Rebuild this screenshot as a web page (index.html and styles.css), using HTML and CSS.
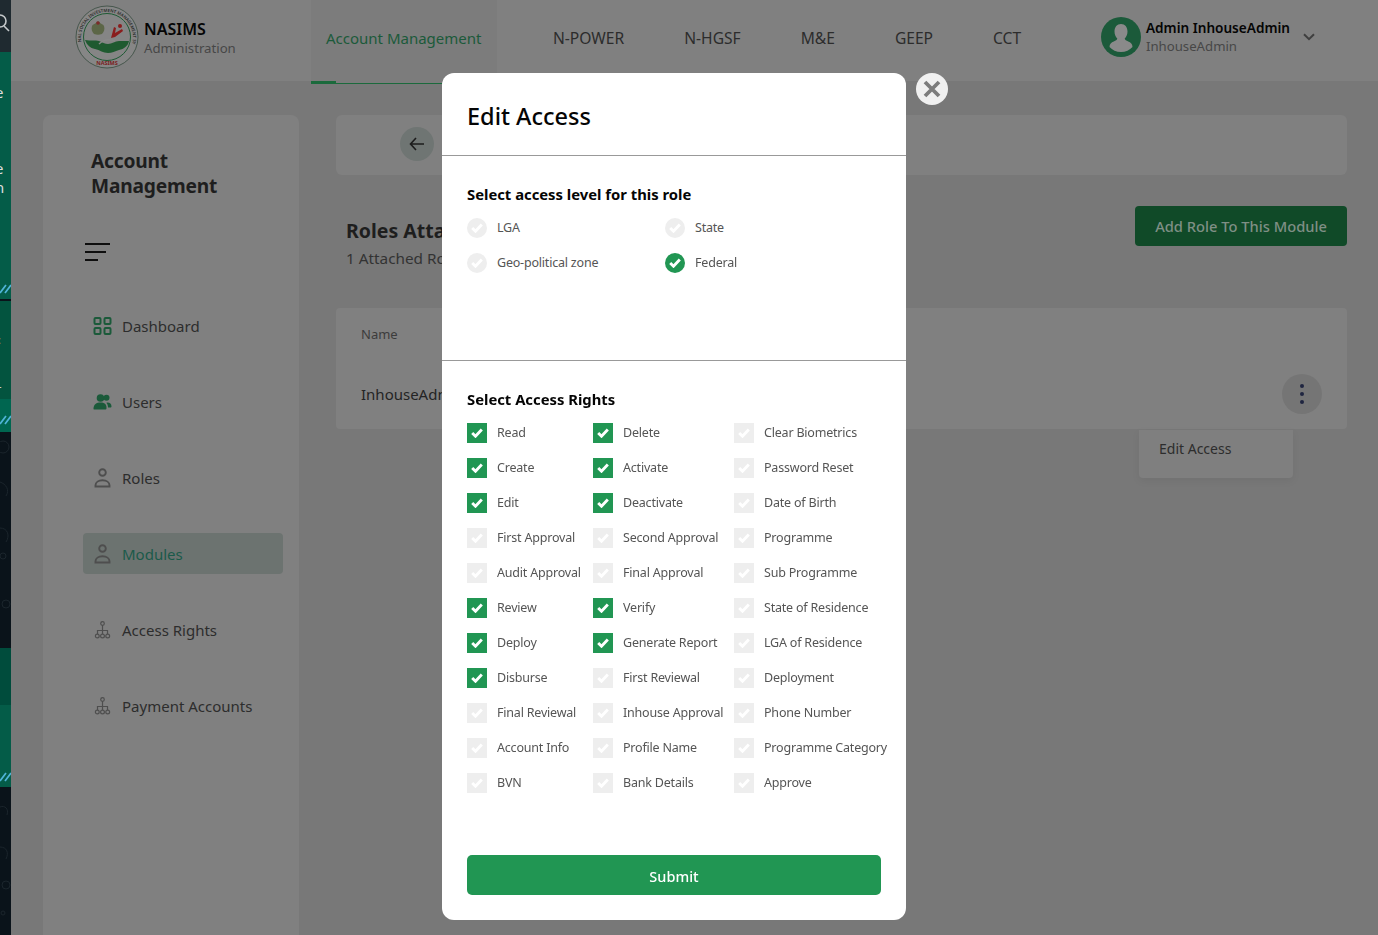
FILE: index.html
```html
<!DOCTYPE html>
<html lang="en">
<head>
    <meta charset="UTF-8">
    <meta name="viewport" content="width=device-width, initial-scale=1.0">
    <title>NASIMS - Edit Access</title>
    <link rel="stylesheet" href="styles.css">
</head>
<body>
    <svg class="icon-defs" width="0" height="0">
        <symbol id="tick" viewBox="0 0 12 10"><path d="M1.200 5 4.500 8.200 10.800 1.600" fill="none" stroke="currentColor" stroke-width="2.900"/></symbol>
        <symbol id="person" viewBox="0 0 16 20"><circle cx="8" cy="4.500" r="3.300" fill="none" stroke="currentColor" stroke-width="1.900"/><path d="M1 18.500h14v-1.200c0-3-3-5-7-5s-7 2-7 5z" fill="none" stroke="currentColor" stroke-width="1.900"/></symbol>
        <symbol id="tree" viewBox="0 0 16 18"><g fill="none" stroke="currentColor" stroke-width="1.200"><circle cx="8" cy="2.500" r="1.800"/><path d="M8 4.300V13M3 13V9.500h10V13"/><circle cx="2.800" cy="15" r="1.900"/><circle cx="8" cy="15" r="1.900"/><circle cx="13.200" cy="15" r="1.900"/></g></symbol>
        <symbol id="marks" viewBox="0 0 11 11"><path d="M0 10 6 2M5 10 11 2" fill="none" stroke="#4fb4d8" stroke-width="1.700"/></symbol>
    </svg>

    <div class="strip">
        <div class="strip-top"><svg viewBox="0 0 11 52" width="11" height="52"><circle cx="0" cy="21" r="6" fill="none" stroke="#c4c8ca" stroke-width="1.600"/><path d="M4 26l5 5" stroke="#c4c8ca" stroke-width="1.600"/></svg></div>
        <div class="strip-green s1"><span class="strip-text">e</span><span class="strip-text">e</span><span class="strip-text">n</span><svg class="strip-marks" width="11" height="11"><use href="#marks"/></svg></div>
        <div class="strip-green s2"><span class="strip-text small">:</span><span class="strip-text small">-</span></div>
        <div class="strip-green s3"><svg class="strip-marks" width="11" height="11"><use href="#marks"/></svg></div>
        <div class="strip-dark d1"><svg viewBox="0 0 11 216" width="11" height="216"><g fill="none" stroke="#1b252c"><circle cx="3" cy="15" r="6"/><path d="M0 50c6 2 10 8 6 14M0 96c8 0 10 8 6 14"/><circle cx="3" cy="124" r="3"/><circle cx="6" cy="172" r="4"/></g></svg></div>
        <div class="strip-green s4"></div>
        <div class="strip-green s5"><svg class="strip-marks" width="11" height="11"><use href="#marks"/></svg></div>
        <div class="strip-dark d2"><svg viewBox="0 0 11 148" width="11" height="148"><g fill="none" stroke="#1b252c"><path d="M0 20c5-2 9 2 7 8M0 60c7 0 9 6 6 12"/><circle cx="6" cy="98" r="4"/><circle cx="3" cy="126" r="2"/></g></svg></div>
    </div>

    <div class="page">
        <header class="topbar">
            <div class="brand">
                <svg class="logo" viewBox="0 0 64 64" width="64" height="64">
                    <defs>
                        <path id="ring-top" d="M6.500 38A26 26 0 1 1 57.500 38"/>
                    </defs>
                    <circle cx="32" cy="32" r="31" fill="#868686" stroke="#46564c" stroke-width="1"/>
                    <circle cx="32" cy="32" r="23.500" fill="#858585" stroke="#1e5a34" stroke-width="1"/>
                    <text class="logo-ring"><textPath href="#ring-top" startOffset="50%" text-anchor="middle">NATIONAL SOCIAL INVESTMENT MANAGEMENT SYSTEM</textPath></text>
                    <path d="M19 29c-2-2-3-5-2-8 1-2 3-2 4-3 1-2 3-2 4 0 1 1 3 1 4 3 1 3 0 6-2 8-3 1-5 1-8 0z" fill="#5c6647"/>
                    <circle cx="23" cy="18" r="1.800" fill="#7c2a2a"/>
                    <path d="M36 33l3-11 2 1-1 5 7-4 1 2-8 6z" fill="#8a1d1d"/>
                    <circle cx="45" cy="21" r="2" fill="#8a1d1d"/>
                    <path d="M10 35c6 1 10 0 14 1 3 1 6 3 9 3 4 0 7-3 11-3h10c-1 5-5 8-10 9-4 1-7 3-11 3-5 0-8-3-13-4-5-1-8-4-10-9z" fill="#1f5a30"/>
                    <path d="M24 39c4-4 10-5 16-3" fill="none" stroke="#8a8a8a" stroke-width="1.400"/>
                    <text class="logo-name" x="32" y="60" text-anchor="middle">NASIMS</text>
                </svg>
                <div class="brand-text">
                    <strong>NASIMS</strong>
                    <span>Administration</span>
                </div>
            </div>
            <nav class="topnav">
                <a class="topnav-item active" href="#">Account Management</a>
                <a class="topnav-item" href="#">N-POWER</a>
                <a class="topnav-item" href="#">N-HGSF</a>
                <a class="topnav-item" href="#">M&amp;E</a>
                <a class="topnav-item" href="#">GEEP</a>
                <a class="topnav-item" href="#">CCT</a>
            </nav>
            <div class="user">
                <svg class="avatar" viewBox="0 0 40 40" width="40" height="40">
                    <circle cx="20" cy="20" r="20" fill="#1b5a3a"/>
                    <path d="M20 7c4 0 6.500 3 6.500 7.500 0 3-1.200 5.500-2.800 7 .3 1.500 1.500 2 3.500 3 2.500 1 4.300 2.500 4.300 5.500-2.800 3-6.800 5-11.500 5s-8.700-2-11.500-5c0-3 1.800-4.500 4.300-5.500 2-1 3.200-1.500 3.500-3-1.600-1.500-2.800-4-2.800-7C13.500 10 16 7 20 7z" fill="#8a8a8a"/>
                </svg>
                <div class="user-text">
                    <strong>Admin InhouseAdmin</strong>
                    <span>InhouseAdmin</span>
                </div>
                <svg class="chevron" viewBox="0 0 12 8" width="12" height="8"><path d="M1 1.200 6 6.200 11 1.200" fill="none" stroke="#3f3f3f" stroke-width="2"/></svg>
            </div>
        </header>

        <div class="main">
            <aside class="sidebar">
                <h2 class="side-title">Account<br>Management</h2>
                <div class="burger"><i></i><i></i><i></i></div>
                <ul class="side-menu">
                    <li class="side-item">
                        <svg class="side-icon green" viewBox="0 0 18 18" width="18" height="18"><g fill="none" stroke="currentColor" stroke-width="2"><rect x="1" y="1" width="6" height="6" rx="1"/><rect x="11" y="1" width="6" height="6" rx="1"/><rect x="1" y="11" width="6" height="6" rx="1"/><rect x="11" y="11" width="6" height="6" rx="1"/></g></svg>
                        Dashboard
                    </li>
                    <li class="side-item">
                        <svg class="side-icon green" viewBox="0 0 18 16" width="18" height="16"><circle cx="7" cy="4" r="3.800" fill="currentColor"/><circle cx="13" cy="3.800" r="3" fill="currentColor"/><path d="M0 15c0-5 3-6.500 7-6.500s6 1.500 6 5.500c0 1-.5 1.500-1.500 1.500h-10C.5 15.500 0 15.500 0 15z" fill="currentColor"/><path d="M14 8.500c2.500 0 4 1.500 4 4 0 .8-.5 1-1.200 1H14.500c0-2-.6-3.700-1.700-4.800z" fill="currentColor"/></svg>
                        Users
                    </li>
                    <li class="side-item">
                        <svg class="side-icon" width="16" height="20"><use href="#person"/></svg>
                        Roles
                    </li>
                    <li class="side-item selected">
                        <svg class="side-icon" width="16" height="20"><use href="#person"/></svg>
                        Modules
                    </li>
                    <li class="side-item">
                        <svg class="side-icon" width="16" height="18"><use href="#tree"/></svg>
                        Access Rights
                    </li>
                    <li class="side-item">
                        <svg class="side-icon" width="16" height="18"><use href="#tree"/></svg>
                        Payment Accounts
                    </li>
                </ul>
            </aside>

            <section class="content">
                <div class="back-card">
                    <span class="back-btn"><svg viewBox="0 0 16 14" width="16" height="14"><path d="M7 1 1.500 7 7 13M2 7h13" fill="none" stroke="#1c1c1c" stroke-width="1.600"/></svg></span>
                </div>
                <div class="title-row">
                    <div>
                        <h2 class="role-title">Roles Attached</h2>
                        <p class="role-sub">1 Attached Role</p>
                    </div>
                    <button class="add-btn">Add Role To This Module</button>
                </div>
                <div class="table-card">
                    <div class="table-head">Name</div>
                    <div class="table-row">
                        <span>InhouseAdmin</span>
                        <span class="dots"><i></i><i></i><i></i></span>
                    </div>
                    <div class="row-menu">Edit Access</div>
                </div>
            </section>
        </div>
    </div>

    <div class="overlay">
        <div class="modal">
            <h1 class="modal-title">Edit Access</h1>

            <div class="level-part">
                <h3 class="part-title">Select access level for this role</h3>
                <div class="level-grid">
                    <label class="opt"><span class="box round"><svg width="12" height="10"><use href="#tick"/></svg></span>LGA</label>
                    <label class="opt"><span class="box round"><svg width="12" height="10"><use href="#tick"/></svg></span>State</label>
                    <label class="opt"><span class="box round"><svg width="12" height="10"><use href="#tick"/></svg></span>Geo-political zone</label>
                    <label class="opt"><span class="box round on"><svg width="12" height="10"><use href="#tick"/></svg></span>Federal</label>
                </div>
            </div>

            <div class="rights-part">
                <h3 class="part-title">Select Access Rights</h3>
                <div class="rights-grid">
                    <label class="opt"><span class="box on"><svg width="12" height="10"><use href="#tick"/></svg></span>Read</label>
                    <label class="opt"><span class="box on"><svg width="12" height="10"><use href="#tick"/></svg></span>Delete</label>
                    <label class="opt"><span class="box"><svg width="12" height="10"><use href="#tick"/></svg></span>Clear Biometrics</label>
                    <label class="opt"><span class="box on"><svg width="12" height="10"><use href="#tick"/></svg></span>Create</label>
                    <label class="opt"><span class="box on"><svg width="12" height="10"><use href="#tick"/></svg></span>Activate</label>
                    <label class="opt"><span class="box"><svg width="12" height="10"><use href="#tick"/></svg></span>Password Reset</label>
                    <label class="opt"><span class="box on"><svg width="12" height="10"><use href="#tick"/></svg></span>Edit</label>
                    <label class="opt"><span class="box on"><svg width="12" height="10"><use href="#tick"/></svg></span>Deactivate</label>
                    <label class="opt"><span class="box"><svg width="12" height="10"><use href="#tick"/></svg></span>Date of Birth</label>
                    <label class="opt"><span class="box"><svg width="12" height="10"><use href="#tick"/></svg></span>First Approval</label>
                    <label class="opt"><span class="box"><svg width="12" height="10"><use href="#tick"/></svg></span>Second Approval</label>
                    <label class="opt"><span class="box"><svg width="12" height="10"><use href="#tick"/></svg></span>Programme</label>
                    <label class="opt"><span class="box"><svg width="12" height="10"><use href="#tick"/></svg></span>Audit Approval</label>
                    <label class="opt"><span class="box"><svg width="12" height="10"><use href="#tick"/></svg></span>Final Approval</label>
                    <label class="opt"><span class="box"><svg width="12" height="10"><use href="#tick"/></svg></span>Sub Programme</label>
                    <label class="opt"><span class="box on"><svg width="12" height="10"><use href="#tick"/></svg></span>Review</label>
                    <label class="opt"><span class="box on"><svg width="12" height="10"><use href="#tick"/></svg></span>Verify</label>
                    <label class="opt"><span class="box"><svg width="12" height="10"><use href="#tick"/></svg></span>State of Residence</label>
                    <label class="opt"><span class="box on"><svg width="12" height="10"><use href="#tick"/></svg></span>Deploy</label>
                    <label class="opt"><span class="box on"><svg width="12" height="10"><use href="#tick"/></svg></span>Generate Report</label>
                    <label class="opt"><span class="box"><svg width="12" height="10"><use href="#tick"/></svg></span>LGA of Residence</label>
                    <label class="opt"><span class="box on"><svg width="12" height="10"><use href="#tick"/></svg></span>Disburse</label>
                    <label class="opt"><span class="box"><svg width="12" height="10"><use href="#tick"/></svg></span>First Reviewal</label>
                    <label class="opt"><span class="box"><svg width="12" height="10"><use href="#tick"/></svg></span>Deployment</label>
                    <label class="opt"><span class="box"><svg width="12" height="10"><use href="#tick"/></svg></span>Final Reviewal</label>
                    <label class="opt"><span class="box"><svg width="12" height="10"><use href="#tick"/></svg></span>Inhouse Approval</label>
                    <label class="opt"><span class="box"><svg width="12" height="10"><use href="#tick"/></svg></span>Phone Number</label>
                    <label class="opt"><span class="box"><svg width="12" height="10"><use href="#tick"/></svg></span>Account Info</label>
                    <label class="opt"><span class="box"><svg width="12" height="10"><use href="#tick"/></svg></span>Profile Name</label>
                    <label class="opt"><span class="box"><svg width="12" height="10"><use href="#tick"/></svg></span>Programme Category</label>
                    <label class="opt"><span class="box"><svg width="12" height="10"><use href="#tick"/></svg></span>BVN</label>
                    <label class="opt"><span class="box"><svg width="12" height="10"><use href="#tick"/></svg></span>Bank Details</label>
                    <label class="opt"><span class="box"><svg width="12" height="10"><use href="#tick"/></svg></span>Approve</label>
                </div>
                <button class="submit-btn">Submit</button>
            </div>
        </div>
        <span class="close-btn"><svg viewBox="0 0 18 18" width="18" height="18"><path d="M2 2 16 16M16 2 2 16" fill="none" stroke="#7c7c7c" stroke-width="3.800"/></svg></span>
    </div>
</body>
</html>
```

FILE: styles.css
```css
* {
    box-sizing: border-box;
}
html, body {
    height: 100%;
}
body {
    margin: 0;
    display: flex;
    height: 935px;
    overflow: hidden;
    font-family: "Noto Sans", "Open Sans", sans-serif;
    background: #787878;
    color: #2a2a2a;
}
.icon-defs {
    display: block;
    flex: none;
}

/* window behind the browser, only a sliver shows */
.strip {
    width: 11px;
    height: 935px;
    flex: none;
    display: flex;
    flex-direction: column;
    background: #0a131a;
    overflow: hidden;
}
.strip svg {
    display: block;
}
.strip-top {
    height: 52px;
    background: #1f2a30;
}
.strip-green {
    background: #045c48;
    position: relative;
    color: #ddd;
}
.s1 { height: 247px; }
.s2 { height: 98px; margin-top: 2px; background: #03543f; }
.s3 { height: 33px; background: #006650; }
.d1 { height: 216px; }
.s4 { height: 57px; background: #004c3c; }
.s5 { height: 82px; background: #045c48; }
.d2 { flex: 1; min-height: 0; overflow: hidden; }
.strip-text {
    position: absolute;
    left: -5px;
    font-size: 15px;
    line-height: 18px;
}
.strip-text:nth-child(1) { top: 31px; }
.strip-text:nth-child(2) { top: 107px; }
.strip-text:nth-child(3) { top: 126px; }
.strip-text.small { left: -2px; top: 30px; font-size: 11px; color: #c9a84a; }
.strip-text.small:nth-child(2) { top: 76px; color: #ddd; }
.strip-marks {
    position: absolute;
    left: 0;
    bottom: 5px;
}
.s3 .strip-marks {
    bottom: 7px;
}

.page {
    flex: 1;
    min-width: 0;
    height: 935px;
    display: flex;
    flex-direction: column;
}

.topbar {
    height: 81px;
    flex: none;
    background: #808080;
    display: flex;
    align-items: center;
}
.brand {
    width: 300px;
    flex: none;
    display: flex;
    align-items: center;
    padding-left: 64px;
    gap: 5px;
    margin-top: -8px;
}
.logo-ring {
    font-size: 4.300px;
    font-weight: 600;
    fill: #2a2a2a;
}
.logo-name {
    font-size: 5.500px;
    font-weight: 700;
    fill: #7a1f1f;
}
.brand-text {
    display: flex;
    flex-direction: column;
    margin-top: 2px;
}
.brand-text strong {
    font-size: 16px;
    line-height: 20px;
    font-weight: 600;
    color: #050505;
}
.brand-text span {
    font-size: 13.200px;
    line-height: 18px;
    color: #474747;
}
.topnav {
    display: flex;
    height: 85px;
    align-self: flex-start;
}
.topnav-item {
    display: flex;
    align-items: center;
    padding: 0 30px;
    font-size: 15.600px;
    color: #2c2c2c;
    text-decoration: none;
    height: 75px;
}
.topnav-item.active {
    position: relative;
    padding: 0 15px 7px;
    margin-right: 26px;
    width: 186px;
    height: 84px;
    font-size: 15px;
    background: #7c7c7c;
    color: #1b5a3a;
    border-bottom: 1px solid #1b6a3c;
}
.topnav-item.active::after {
    content: "";
    position: absolute;
    left: 0;
    bottom: -1px;
    width: 25px;
    height: 3px;
    background: #1b6a3c;
}
.user {
    margin-left: auto;
    margin-right: 63px;
    margin-bottom: 7px;
    display: flex;
    align-items: center;
}
.avatar {
    margin-right: 5px;
}
.user-text {
    display: flex;
    flex-direction: column;
}
.user-text strong {
    font-size: 13.600px;
    line-height: 19px;
    font-weight: 600;
    color: #050505;
}
.user-text span {
    font-size: 13.200px;
    line-height: 19px;
    color: #474747;
}
.chevron {
    margin-left: 13px;
}

.main {
    flex: 1;
    min-height: 0;
    display: flex;
    padding: 34px 31px 0 32px;
}
.sidebar {
    width: 256px;
    flex: none;
    background: #808080;
    border-radius: 8px 8px 0 0;
    padding: 33px 16px 0 48px;
}
.side-title {
    margin: 0;
    font-size: 19.200px;
    line-height: 25px;
    font-weight: 700;
    letter-spacing: -0.2px;
    color: #1e1e1e;
}
.burger {
    margin: 45px 0 0 -6px;
    display: flex;
    flex-direction: column;
    gap: 6px;
}
.burger i {
    display: block;
    height: 2px;
    width: 25px;
    background: #0e0e0e;
}
.burger i:nth-child(2) { width: 21px; }
.burger i:nth-child(3) { width: 13px; }
.side-menu {
    list-style: none;
    margin: 44px 0 0 -8px;
    padding: 0;
    display: flex;
    flex-direction: column;
    gap: 35px;
}
.side-item {
    display: flex;
    align-items: center;
    height: 41px;
    padding-left: 10px;
    font-size: 15px;
    color: #2d2d2d;
    border-radius: 4px;
}
.side-item.selected {
    background: #6c7370;
    color: #1b5a4a;
}
.side-icon {
    flex: none;
    margin-right: 10px;
    width: 19px;
    color: #4e4e4e;
}
.side-icon.green {
    color: #1b5a3a;
}

.content {
    flex: 1;
    margin-left: 37px;
    min-width: 0;
}
.back-card {
    height: 60px;
    background: #808080;
    border-radius: 6px;
    display: flex;
    align-items: center;
    padding: 0 0 2px 64px;
}
.back-btn {
    width: 34px;
    height: 34px;
    border-radius: 50%;
    background: #6f7573;
    display: flex;
    align-items: center;
    justify-content: center;
}
.title-row {
    display: flex;
    justify-content: space-between;
    padding: 31px 0 0 10px;
    height: 133px;
}
.role-title {
    margin: 11px 0 0;
    font-size: 19.500px;
    line-height: 27px;
    font-weight: 700;
    color: #1e1e1e;
}
.role-sub {
    margin: 4px 0 0;
    font-size: 15.300px;
    color: #333;
}
.add-btn {
    width: 212px;
    height: 40px;
    border: 0;
    border-radius: 4px;
    background: #104a28;
    color: #7f8f85;
    font-family: inherit;
    font-size: 14.700px;
    font-weight: 500;
}
.table-card {
    height: 121px;
    background: #808080;
    border-radius: 4px;
    position: relative;
}
.table-head {
    padding: 17px 25px 0;
    font-size: 13px;
    line-height: 18px;
    color: #3c3c3c;
}
.table-row {
    display: flex;
    justify-content: space-between;
    align-items: center;
    padding: 31px 25px 0;
    font-size: 15px;
    color: #242424;
}
.dots {
    width: 40px;
    height: 40px;
    border-radius: 50%;
    background: #757575;
    display: flex;
    flex-direction: column;
    align-items: center;
    justify-content: center;
    gap: 4px;
}
.dots i {
    width: 4px;
    height: 4px;
    border-radius: 50%;
    background: #1f2540;
}
.row-menu {
    position: absolute;
    top: 122px;
    right: 54px;
    width: 154px;
    height: 48px;
    padding: 9px 20px;
    font-size: 14px;
    color: #2d2d2d;
    background: #7f7f7f;
    border-radius: 0 0 4px 4px;
    box-shadow: 0 3px 8px rgba(0, 0, 0, 0.06);
}

/* modal over the dimmed page */
.overlay {
    position: fixed;
    top: 0;
    left: 0;
    right: 0;
    bottom: 0;
}
.modal {
    position: absolute;
    top: 73px;
    left: 442px;
    width: 464px;
    height: 847px;
    background: #fff;
    border-radius: 12px;
    display: flex;
    flex-direction: column;
}
.modal-title {
    margin: 0;
    height: 83px;
    padding: 25px 25px 0;
    font-size: 23.500px;
    line-height: 36px;
    font-weight: 500;
    color: #050505;
    border-bottom: 1px solid #999;
}
.level-part {
    height: 205px;
    padding: 28px 25px 0;
    border-bottom: 1px solid #999;
}
.part-title {
    margin: 0;
    font-size: 14.800px;
    line-height: 21px;
    font-weight: 700;
    color: #050505;
}
.level-grid {
    display: grid;
    grid-template-columns: 198px 1fr;
    row-gap: 15px;
    margin-top: 12px;
}
.rights-part {
    flex: 1;
    padding: 28px 0 0 25px;
    display: flex;
    flex-direction: column;
}
.rights-grid {
    display: grid;
    grid-template-columns: 126px 141px 1fr;
    row-gap: 15px;
    margin-top: 12px;
}
.opt {
    display: flex;
    align-items: center;
    height: 20px;
    font-size: 12.500px;
    letter-spacing: -0.2px;
    color: #555;
    white-space: nowrap;
}
.box {
    flex: none;
    width: 20px;
    height: 20px;
    margin: 2px 10px 0 0;
    background: #eee;
    color: #fff;
    display: flex;
    align-items: center;
    justify-content: center;
}
.box.round {
    border-radius: 50%;
}
.box.on {
    background: #219653;
}
.submit-btn {
    margin-top: 63px;
    width: 414px;
    height: 40px;
    padding-top: 3px;
    border: 0;
    border-radius: 5px;
    background: #219653;
    color: #fff;
    font-family: inherit;
    font-size: 14.500px;
    font-weight: 500;
}
.close-btn {
    position: absolute;
    top: 73px;
    left: 916px;
    width: 32px;
    height: 32px;
    border-radius: 50%;
    background: #f0f0f0;
    display: flex;
    align-items: center;
    justify-content: center;
}
```
